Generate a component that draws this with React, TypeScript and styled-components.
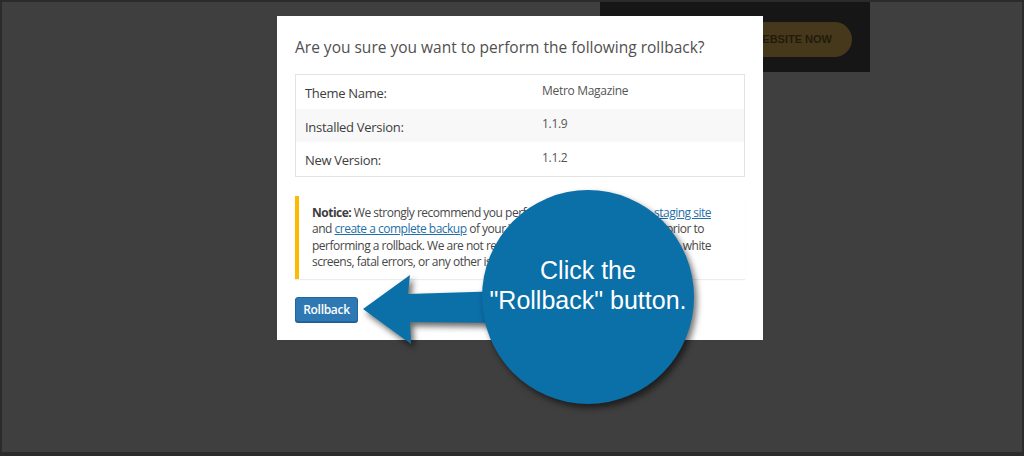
import styled, { createGlobalStyle } from 'styled-components';

const GlobalStyle = createGlobalStyle`
  html, body {
    margin: 0;
    padding: 0;
    background: #2b2b2b;
  }
`;

const rows = [
  { label: 'Theme Name:', value: 'Metro Magazine' },
  { label: 'Installed Version:', value: '1.1.9' },
  { label: 'New Version:', value: '1.1.2' },
];

const App = () => {
  return (
    <>
      <GlobalStyle />
      <Frame>
        <Page>
          <TopBar>
            <Banner>
              <BannerButton>VISIT WEBSITE NOW</BannerButton>
            </Banner>
          </TopBar>

          <Modal>
            <Title>Are you sure you want to perform the following rollback?</Title>
            <Table>
              {rows.map((row, i) => (
                <Row key={row.label} $striped={i % 2 === 1}>
                  <Label>{row.label}</Label>
                  <Value>{row.value}</Value>
                </Row>
              ))}
            </Table>

            <Notice>
              <Line>
                <Lead>
                  <strong>Notice:</strong> We strongly recommend you perform the test rollback on a
                </Lead>
                <Tail>
                  <Link href="#">staging site</Link>
                </Tail>
              </Line>
              <Line $inset={7}>
                <Lead>
                  and <Link href="#">create a complete backup</Link> of your WordPress files and database
                </Lead>
                <Tail>prior to</Tail>
              </Line>
              <Line>
                <Lead>performing a rollback. We are not responsible for any misuse, deletions,</Lead>
                <Tail>white</Tail>
              </Line>
              <Line>
                <Lead>screens, fatal errors, or any other issue arising from using this plugin.</Lead>
              </Line>
            </Notice>

            <Actions>
              <PrimaryButton>Rollback</PrimaryButton>
            </Actions>
          </Modal>

          <Arrow viewBox="0 0 160 90" width="160" height="90">
            <polygon
              points="8,44 55,10 53,29 150,26 150,58 55,57 56,79"
              fill="#0b6fa8"
            />
          </Arrow>

          <Callout>
            <CalloutText>
              Click the
              <br />
              "Rollback" button.
            </CalloutText>
          </Callout>
        </Page>
      </Frame>
    </>
  );
};

const Frame = styled.div`
  width: 1024px;
  height: 456px;
  padding: 2px 2px 4px 2px;
  box-sizing: border-box;
  background: #2b2b2b;
`;

const Page = styled.div`
  position: relative;
  height: 100%;
  background: #3f3f3f;
  overflow: hidden;
  font-family: 'Open Sans', 'Noto Sans', sans-serif;
`;

const TopBar = styled.div`
  display: flex;
  justify-content: flex-end;
  padding-right: 152px;
  margin-top: -2px;
`;

const Banner = styled.div`
  width: 270px;
  height: 72px;
  background: #161616;
  display: flex;
  align-items: center;
  justify-content: flex-end;
  padding-right: 18px;
  box-sizing: border-box;
`;

const BannerButton = styled.div`
  height: 35px;
  padding: 0 20px 0 28px;
  border-radius: 18px;
  background: #46381b;
  color: #221b0c;
  font-family: 'Liberation Sans', Arial, sans-serif;
  font-weight: 700;
  font-size: 11px;
  display: flex;
  align-items: center;
  margin-top: 6px;
`;

const Modal = styled.div`
  position: absolute;
  left: 275px;
  top: 14px;
  width: 486px;
  height: 324px;
  background: #ffffff;
  padding: 18px 18px 0 18px;
  box-sizing: border-box;
`;

const Title = styled.h2`
  margin: 0 0 14px 0;
  font-size: 15.5px;
  font-weight: 400;
  color: #505050;
  line-height: 26px;
  white-space: nowrap;
`;

const Table = styled.div`
  border: 1px solid #e3e3e3;
  display: flex;
  flex-direction: column;
`;

const Row = styled.div<{ $striped: boolean }>`
  display: grid;
  grid-template-columns: 237px 1fr;
  height: 33.5px;
  align-items: center;
  background: ${(p) => (p.$striped ? '#f8f8f8' : '#ffffff')};
  padding-left: 9px;
`;

const Label = styled.span`
  font-size: 13px;
  color: #3d3d3d;
  padding-top: 3px;
  letter-spacing: -0.3px;
`;

const Value = styled.span`
  font-size: 12px;
  color: #555555;
  padding-bottom: 3px;
  letter-spacing: -0.3px;
`;

const Notice = styled.div`
  margin-top: 19px;
  border-left: 4px solid #ffb900;
  background: #ffffff;
  box-shadow: 0 1px 1px rgba(0, 0, 0, 0.07);
  padding: 9px 34px 8px 13px;
  font-size: 12px;
  line-height: 16.6px;
  color: #474747;
  letter-spacing: -0.5px;

  strong {
    font-weight: 700;
    color: #3d3d3d;
  }
`;

const Line = styled.div<{ $inset?: number }>`
  display: flex;
  white-space: nowrap;
  padding-right: ${(p) => p.$inset ?? 0}px;
`;

const Lead = styled.span`
  flex: 1 1 auto;
  min-width: 0;
  overflow: hidden;
`;

const Tail = styled.span`
  flex: none;
  margin-left: 4px;
`;

const Link = styled.a`
  color: #1f6fa8;
  text-decoration: underline;
`;

const Actions = styled.div`
  display: flex;
  gap: 8px;
  margin-top: 18px;
`;

const PrimaryButton = styled.button`
  width: 63px;
  height: 25px;
  border: 1px solid #21669c;
  border-radius: 3px;
  background: #2e79b4;
  color: #ffffff;
  font-family: 'Open Sans', 'Noto Sans', sans-serif;
  font-size: 12px;
  font-weight: 600;
  letter-spacing: -0.3px;
  padding: 0;
  box-shadow: 0 1px 0 #1d5e8f;
`;

const Arrow = styled.svg`
  position: absolute;
  left: 353px;
  top: 263px;
  filter: drop-shadow(3px 4px 3px rgba(0, 0, 0, 0.6));
`;

const Callout = styled.div`
  position: absolute;
  left: 480px;
  top: 188px;
  width: 212px;
  height: 214px;
  border-radius: 50%;
  background: #0b6fa8;
  box-shadow: 3px 4px 6px rgba(0, 0, 0, 0.55);
  display: flex;
  align-items: center;
  justify-content: center;
  padding-bottom: 24px;
  box-sizing: border-box;
`;

const CalloutText = styled.div`
  color: #ffffff;
  font-family: 'Liberation Sans', Arial, sans-serif;
  font-size: 25px;
  line-height: 30px;
  text-align: center;
  white-space: nowrap;
`;

export default App;
